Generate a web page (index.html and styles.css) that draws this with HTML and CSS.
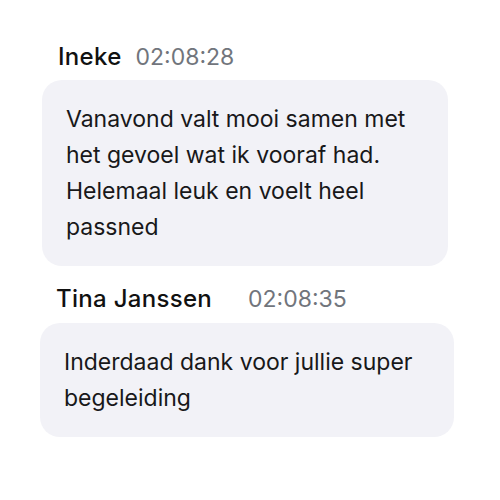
FILE: index.html
```html
<!DOCTYPE html>
<html>
<head>
<meta charset="utf-8">
<link rel="stylesheet" href="styles.css">
</head>
<body>
<div class="chat">
  <div class="msg msg-first">
    <div class="meta">
      <span class="name">Ineke</span>
      <span class="time">02:08:28</span>
    </div>
    <div class="bubble">Vanavond valt mooi samen met het gevoel wat ik vooraf had. Helemaal leuk en voelt heel passned</div>
  </div>
  <div class="msg msg-second">
    <div class="meta meta-wide">
      <span class="name">Tina Janssen</span>
      <span class="time">02:08:35</span>
    </div>
    <div class="bubble">Inderdaad dank voor jullie super begeleiding</div>
  </div>
</div>
</body>
</html>
```
FILE: styles.css
```css
html, body {
  margin: 0;
  padding: 0;
  background: #ffffff;
}
body {
  font-family: Inter, "Noto Sans", sans-serif;
  color: #1c1c1e;
  width: 500px;
  height: 500px;
  overflow: hidden;
}
.chat {
  padding-top: 43px;
  display: flex;
  flex-direction: column;
  gap: 19px;
}
.msg-first {
  margin-left: 42px;
  width: 406px;
}
.msg-second {
  margin-left: 40px;
  width: 414px;
}
.meta {
  display: flex;
  align-items: baseline;
  gap: 14px;
  padding-left: 16px;
  line-height: 28px;
  margin-bottom: 9px;
}
.meta-wide {
  gap: 36px;
  margin-bottom: 10px;
}
.name {
  font-size: 24px;
  font-weight: 500;
  color: #111111;
  letter-spacing: 0.3px;
}
.time {
  font-size: 23px;
  font-weight: 400;
  color: #71757c;
}
.bubble {
  background: #f2f2f7;
  border-radius: 20px;
  padding: 21px 24px;
  font-size: 23px;
  line-height: 36px;
  color: #18181a;
}
```
